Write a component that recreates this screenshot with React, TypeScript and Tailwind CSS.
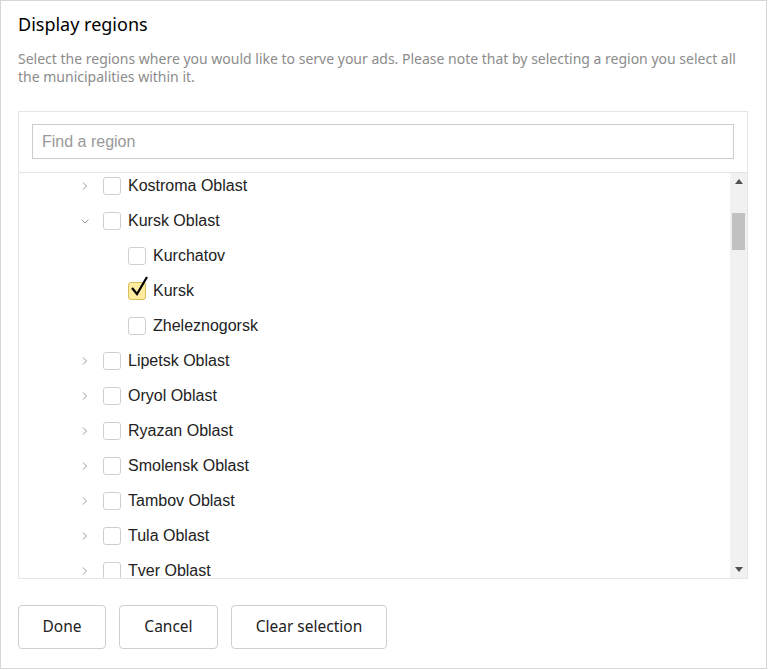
import React from 'react';

type Row = { name: string; level: 0 | 1; expand?: 'closed' | 'open'; checked?: boolean };

const rows: Row[] = [
  { name: 'Kostroma Oblast', level: 0, expand: 'closed' },
  { name: 'Kursk Oblast', level: 0, expand: 'open' },
  { name: 'Kurchatov', level: 1 },
  { name: 'Kursk', level: 1, checked: true },
  { name: 'Zheleznogorsk', level: 1 },
  { name: 'Lipetsk Oblast', level: 0, expand: 'closed' },
  { name: 'Oryol Oblast', level: 0, expand: 'closed' },
  { name: 'Ryazan Oblast', level: 0, expand: 'closed' },
  { name: 'Smolensk Oblast', level: 0, expand: 'closed' },
  { name: 'Tambov Oblast', level: 0, expand: 'closed' },
  { name: 'Tula Oblast', level: 0, expand: 'closed' },
  { name: 'Tver Oblast', level: 0, expand: 'closed' },
];

const Chevron: React.FC<{ open?: boolean }> = ({ open }) => (
  <svg width="10" height="10" viewBox="0 0 10 10" className="text-[#9a9a9a]">
    {open ? (
      <path d="M1.5 3.5 L5 7 L8.5 3.5" fill="none" stroke="currentColor" strokeWidth="1" />
    ) : (
      <path d="M3 1.5 L6.5 5 L3 8.5" fill="none" stroke="currentColor" strokeWidth="1" />
    )}
  </svg>
);

const Checkbox: React.FC<{ checked?: boolean }> = ({ checked }) => (
  <span
    className={
      checked
        ? 'relative w-[18px] h-[18px] rounded-[3px] border border-[#d9be5c] bg-[#ffeba0] shrink-0'
        : 'relative w-[18px] h-[18px] rounded-[3px] border border-[#cfcfcf] bg-white shrink-0'
    }
  >
    {checked && (
      <svg width="20" height="22" viewBox="0 0 20 22" className="absolute left-[1px] top-[-8px]">
        <path d="M2 13 L7 19 L17 2" fill="none" stroke="#000" strokeWidth="2.2" strokeLinejoin="miter" />
      </svg>
    )}
  </span>
);

const RegionRow: React.FC<{ row: Row }> = ({ row }) => (
  <div
    className={
      row.level === 0
        ? 'h-[35px] flex items-center pl-[61px]'
        : 'h-[35px] flex items-center pl-[109px]'
    }
  >
    {row.level === 0 && (
      <span className="w-[23px] flex items-center">
        <Chevron open={row.expand === 'open'} />
      </span>
    )}
    <Checkbox checked={row.checked} />
    <span className="ml-[7px] text-[16px] text-[#222] font-['Liberation_Sans',Arial,sans-serif]">{row.name}</span>
  </div>
);

const App: React.FC = () => {
  return (
    <div className="w-[767px] h-[669px] border border-[#d6d6d6] bg-white flex flex-col px-[17px] font-['Noto_Sans',sans-serif]">
      <h3 className="pt-[11px] text-[18px] leading-[24px] text-black font-normal">Display regions</h3>
      <p className="mt-[14px] text-[14px] leading-[18px] text-[#8c8c8c]">
        Select the regions where you would like to serve your ads. Please note that by selecting a region you select all
        the municipalities within it.
      </p>

      <div className="mt-[25px] w-[730px] h-[468px] border border-[#e5e5e5] flex flex-col">
        <div className="h-[61px] border-b border-[#e5e5e5] pt-[12px] pl-[13px]">
          <div className="w-[702px] h-[35px] border border-[#cccccc] flex items-center pl-[9px]">
            <span className="text-[16px] text-[#999] font-['Liberation_Sans',Arial,sans-serif]">Find a region</span>
          </div>
        </div>
        <div className="flex flex-1 min-h-0">
          <div className="flex-1 overflow-hidden">
            <div className="mt-[-5px]">
              {rows.map((r) => (
                <RegionRow key={r.name} row={r} />
              ))}
            </div>
          </div>
          <div className="w-[17px] bg-[#f1f1f1] flex flex-col items-center">
            <div className="h-[17px] flex items-center justify-center">
              <svg width="8" height="5" viewBox="0 0 8 5">
                <path d="M0 5 L4 0 L8 5 Z" fill="#505050" />
              </svg>
            </div>
            <div className="mt-[23px] w-[13px] h-[37px] bg-[#c1c1c1]" />
            <div className="flex-1" />
            <div className="h-[17px] flex items-center justify-center">
              <svg width="8" height="5" viewBox="0 0 8 5">
                <path d="M0 0 L8 0 L4 5 Z" fill="#505050" />
              </svg>
            </div>
          </div>
        </div>
      </div>

      <div className="mt-[26px] flex gap-[13px] text-[15.5px] text-[#222]">
        <button className="h-[44px] w-[88px] rounded-[4px] border border-[#cfcfcf] bg-white">Done</button>
        <button className="h-[44px] w-[99px] rounded-[4px] border border-[#cfcfcf] bg-white">Cancel</button>
        <button className="h-[44px] w-[156px] rounded-[4px] border border-[#cfcfcf] bg-white">Clear selection</button>
      </div>
    </div>
  );
};

export default App;
